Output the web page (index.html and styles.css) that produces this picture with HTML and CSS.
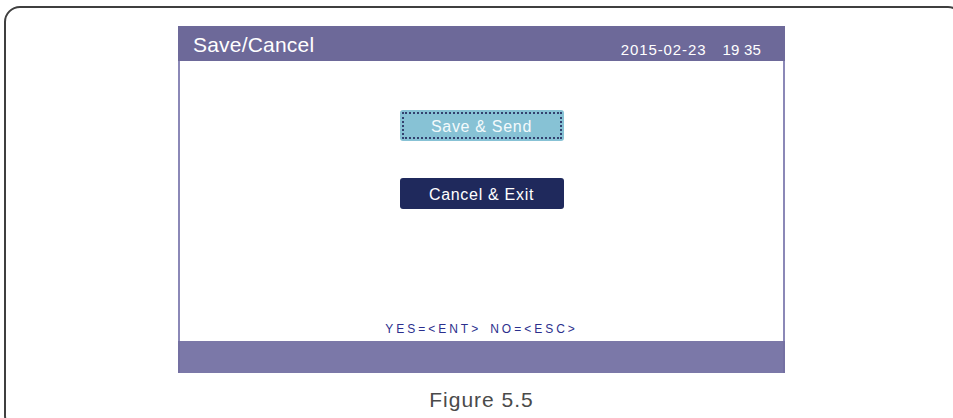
FILE: index.html
```html
<!DOCTYPE html>
<html lang="en">
<head>
    <meta charset="UTF-8">
    <meta name="viewport" content="width=device-width, initial-scale=1.0">
    <title>Save/Cancel</title>
    <link rel="stylesheet" href="styles.css">
</head>
<body>
    <div class="frame">
        <div class="figure">
            <div class="screen">
                <div class="header">
                    <span class="title">Save/Cancel</span>
                    <span class="clock"><span>2015-02-23</span><span class="time">19 35</span></span>
                </div>
                <div class="content">
                    <button type="button" class="btn btn-selected">Save &amp; Send</button>
                    <button type="button" class="btn btn-dark">Cancel &amp; Exit</button>
                    <div class="hint">YES=&lt;ENT&gt;<span class="gap"></span>NO=&lt;ESC&gt;</div>
                </div>
                <div class="footer"></div>
            </div>
            <div class="caption">Figure 5.5</div>
        </div>
    </div>
</body>
</html>
```

FILE: styles.css
```css
html, body {
    margin: 0;
    overflow: hidden;
    background: #fff;
    font-family: "Liberation Sans", Arial, sans-serif;
}

.frame {
    box-sizing: border-box;
    width: 960px;
    height: 426px;
    margin: 6px 0 0 4px;
    border: 2px solid #3f3f3f;
    border-radius: 16px;
}

.figure {
    width: 607px;
    margin: 18px 0 0 172px;
}

.header {
    display: flex;
    justify-content: space-between;
    align-items: flex-start;
    height: 35px;
    padding: 0 24px 0 15px;
    background-color: #6d6999;
    color: #fff;
}

.title {
    font-size: 21px;
    line-height: 24px;
    margin-top: 7px;
    letter-spacing: 0.2px;
}

.clock {
    font-size: 15px;
    line-height: 18px;
    margin-top: 15px;
    letter-spacing: 0.9px;
}

.time {
    margin-left: 16px;
    letter-spacing: 0.2px;
}

.content {
    display: flex;
    flex-direction: column;
    align-items: center;
    height: 280px;
    box-sizing: border-box;
    padding-top: 49px;
    border-left: 2px solid #8b88b7;
    border-right: 2px solid #8b88b7;
}

.btn {
    width: 164px;
    height: 31px;
    padding: 3px 0 0;
    border: none;
    border-radius: 3px;
    font-family: inherit;
    font-size: 16px;
    letter-spacing: 0.7px;
    color: #fff;
}

.btn-selected {
    background-color: #87c2d5;
    outline: 2px dotted #33416f;
    outline-offset: -4px;
    color: #f4fafc;
}

.btn-dark {
    background-color: #1f295c;
    margin-top: 37px;
}

.hint {
    margin-top: auto;
    margin-bottom: 5px;
    font-size: 12px;
    line-height: 14px;
    letter-spacing: 3px;
    color: #2b2f8d;
}

.gap {
    display: inline-block;
    width: 9px;
}

.footer {
    height: 32px;
    background-color: #7b78a8;
    border-left: 2px solid #7470a2;
    border-right: 2px solid #7470a2;
    box-sizing: border-box;
}

.caption {
    margin-top: 15px;
    text-align: center;
    font-size: 21px;
    line-height: 24px;
    letter-spacing: 1px;
    color: #4a4a4a;
}
```
